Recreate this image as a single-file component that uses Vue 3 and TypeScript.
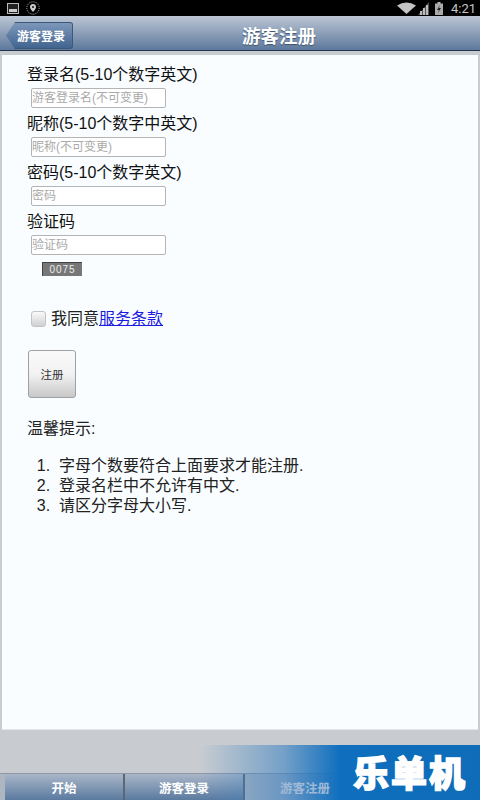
<template>
  <div class="screen">
    <!-- статус-бар -->
    <div class="status">
      <div class="status-left">
        <svg width="12" height="11" viewBox="0 0 12 11">
          <rect x="0.5" y="0.5" width="11" height="10" fill="#222" stroke="#bbb" />
          <rect x="2" y="6" width="8" height="3" fill="#ccc" />
        </svg>
        <svg width="14" height="14" viewBox="0 0 14 14">
          <circle cx="7" cy="7" r="6.2" fill="none" stroke="#bbb" stroke-dasharray="1 1" />
          <path d="M7 3a3 3 0 0 1 3 3c0 2-3 5-3 5s-3-3-3-5a3 3 0 0 1 3-3z" fill="#ccc" />
          <circle cx="7" cy="6" r="1" fill="#111" />
        </svg>
      </div>
      <div class="status-right">
        <svg width="19" height="12" viewBox="0 0 19 12">
          <path d="M0 3.500Q9.500 -2.500 19 3.500L9.500 12z" fill="#c4c4c4" />
        </svg>
        <svg width="11" height="13" viewBox="0 0 11 13">
          <path d="M0 13L11 0V13z" fill="#555" />
          <rect x="2" y="9" width="2" height="4" fill="#bbb" />
          <rect x="5" y="6" width="2" height="7" fill="#bbb" />
          <rect x="8" y="3" width="2" height="10" fill="#bbb" />
        </svg>
        <svg class="battery" width="8" height="13" viewBox="0 0 8 13">
          <rect x="2.500" y="0" width="3" height="2" fill="#bbb" />
          <rect x="0" y="1.500" width="8" height="11.500" fill="#aaa" />
          <path d="M5 3L2 8H4L3 11L6 6H4z" fill="#222" />
        </svg>
        <span class="time">4:21</span>
      </div>
    </div>

    <!-- шапка -->
    <div class="header">
      <button class="back">游客登录</button>
      <div class="title">游客注册</div>
    </div>

    <div class="panel">
      <div class="form">
        <div v-for="f in fields" :key="f.label" class="field">
          <div class="label">{{ f.label }}</div>
          <input class="input" :placeholder="f.hint" />
        </div>
        <div class="captcha">0075</div>
        <label class="agree">
          <span class="check"></span>
          <span>我同意<a class="link">服务条款</a></span>
        </label>
        <button class="submit">注册</button>
        <div class="tips-title">温馨提示:</div>
        <ol class="tips">
          <li v-for="t in tips" :key="t">{{ t }}</li>
        </ol>
      </div>
    </div>

    <!-- нижняя панель -->
    <div class="footer">
      <div class="tabs">
        <div v-for="t in tabs" :key="t" class="tab" :class="{ active: t === '游客注册' }">{{ t }}</div>
      </div>
    </div>

    <div class="banner"><span class="logo">乐单机</span></div>
  </div>
</template>

<script setup lang="ts">
const fields = [
  { label: '登录名(5-10个数字英文)', hint: '游客登录名(不可变更)' },
  { label: '昵称(5-10个数字中英文)', hint: '昵称(不可变更)' },
  { label: '密码(5-10个数字英文)', hint: '密码' },
  { label: '验证码', hint: '验证码' },
]

const tips = ['字母个数要符合上面要求才能注册.', '登录名栏中不允许有中文.', '请区分字母大小写.']

const tabs = ['开始', '游客登录', '游客注册']
</script>

<style>
html,
body {
  margin: 0;
  background: #c8ccd0;
}
</style>

<style scoped>
.screen {
  position: relative;
  width: 480px;
  height: 800px;
  overflow: hidden;
  display: flex;
  flex-direction: column;
  background: #c8ccd0;
  font-family: 'Liberation Sans', 'Noto Sans CJK SC', sans-serif;
}

.status {
  height: 16px;
  flex: none;
  background: #000;
  display: flex;
  justify-content: space-between;
  align-items: center;
  padding: 0 4px 0 7px;
}

.status-left,
.status-right {
  display: flex;
  align-items: center;
}

.status-left {
  gap: 7px;
}

.status-right {
  gap: 2px;
}

.battery {
  margin-left: 4px;
}

.time {
  margin-left: 6px;
  font-family: Roboto, sans-serif;
  font-size: 13px;
  color: #c4c4c4;
}

.header {
  height: 34px;
  flex: none;
  position: relative;
  display: flex;
  align-items: center;
  justify-content: center;
  padding-left: 78px;
  background: linear-gradient(#bcc6d4, #5d789c);
  border-bottom: 1px solid #24364e;
}

.title {
  margin-top: 3px;
  font-size: 18.500px;
  font-weight: bold;
  color: #fff;
  text-shadow: 0 1px 1px #3c5270;
}

.back {
  position: absolute;
  left: 6px;
  top: 6px;
  width: 67px;
  height: 27px;
  padding: 0 0 0 4px;
  border: 1px solid #3d5878;
  border-left: none;
  border-radius: 0 3px 3px 0;
  background: linear-gradient(#7d97ba, #41648f);
  color: #fff;
  font-family: inherit;
  font-size: 12px;
  font-weight: bold;
  clip-path: polygon(0 50%, 9px 0, 100% 0, 100% 100%, 9px 100%);
}

.panel {
  margin: 4px 2px 0;
  height: 675px;
  flex: none;
  background: #f9fdff;
  border-bottom: 1px solid #e4e6e8;
  box-sizing: border-box;
}

.form {
  padding: 8px 0 0 25px;
}

.field {
  display: flex;
  flex-direction: column;
  align-items: flex-start;
  height: 49px;
}

.label {
  height: 24px;
  line-height: 24px;
  font-size: 16px;
  color: #111;
}

.input {
  width: 135px;
  height: 20px;
  margin: 1px 0 0 4px;
  padding: 0;
  box-sizing: border-box;
  background: #fff;
  border: 1px solid #b4b4b4;
  border-radius: 2px;
  outline: none;
  font-family: inherit;
  font-size: 12px;
}

.input::placeholder {
  color: #aaa;
}

.captcha {
  width: 40px;
  height: 14px;
  margin: 3px 0 0 15px;
  background: #777;
  border: 1px solid #444;
  border-width: 1px 0 0 1px;
  box-sizing: border-box;
  color: #eee;
  font-size: 10px;
  line-height: 13px;
  letter-spacing: 1px;
  text-align: center;
}

.agree {
  display: flex;
  align-items: center;
  gap: 5px;
  margin: 30px 0 0 4px;
  height: 22px;
  font-size: 16px;
  color: #222;
}

.check {
  width: 13px;
  height: 14px;
  margin-top: 3px;
  border: 1px solid #c4c4c4;
  border-radius: 3px;
  background: linear-gradient(#fafafa, #d0d0d0);
}

.link {
  color: #1a1ae0;
  text-decoration: underline;
}

.submit {
  display: block;
  width: 48px;
  height: 48px;
  margin: 22px 0 0 1px;
  padding: 0;
  border: 1px solid #a0a0a0;
  border-radius: 3px;
  background: linear-gradient(#fafafa, #f2f2f2 50%, #c8c8c8);
  color: #333;
  font-family: inherit;
  font-size: 11.500px;
}

.tips-title {
  margin-top: 21px;
  font-size: 16px;
  line-height: 20px;
  color: #222;
}

.tips {
  margin: 17px 0 0;
  padding: 0 0 0 32px;
  font-size: 16px;
  line-height: 20px;
  color: #222;
}

.tips li::marker {
  content: counter(list-item) '.\00a0\00a0';
}

.footer {
  flex: 1;
  display: flex;
  flex-direction: column;
  justify-content: flex-end;
}

.tabs {
  height: 27px;
  display: grid;
  grid-template-columns: 120px 120px 120px;
  padding-left: 5px;
  background: #aeb6c2;
  border-top: 1px solid #8d97a5;
  box-sizing: border-box;
}

.tab {
  display: flex;
  align-items: flex-end;
  justify-content: center;
  padding-bottom: 3px;
  border-right: 2px solid #5a6776;
  background: linear-gradient(#aab6c8, #5a7a9f);
  color: #fff;
  font-size: 12.500px;
  font-weight: bold;
}

.tab.active {
  position: relative;
  z-index: 1;
  color: #9fb9d6;
  background: transparent;
  border-right: none;
}

.banner {
  position: absolute;
  right: 0;
  bottom: 0;
  width: 280px;
  height: 55px;
  display: flex;
  align-items: center;
  justify-content: flex-end;
  padding: 4px 13px 0 0;
  box-sizing: border-box;
  background: linear-gradient(90deg, rgba(15, 110, 190, 0), rgba(60, 130, 195, 0.6) 30%, #0f6fbe 50%, #0e6cb8);
}

.logo {
  font-size: 36px;
  line-height: 1;
  font-weight: 900;
  letter-spacing: 2px;
  color: #fff;
  -webkit-text-stroke: 1.500px #fff;
}
</style>
